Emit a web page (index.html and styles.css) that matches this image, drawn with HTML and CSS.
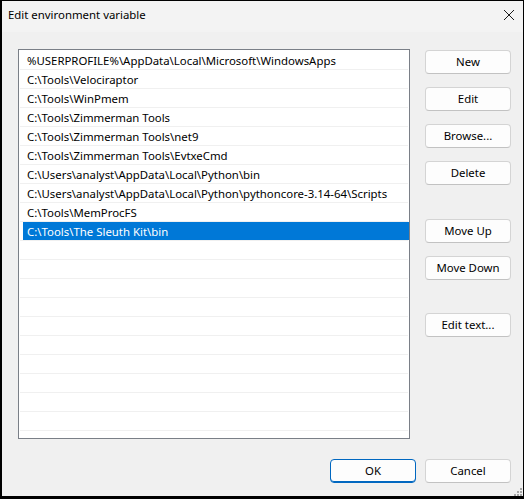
FILE: index.html
```html
<!DOCTYPE html>
<html>
<head>
<meta charset="utf-8">
<link rel="stylesheet" href="styles.css">
</head>
<body>
<div class="window">
  <div class="titlebar">
    <span class="title">Edit environment variable</span>
    <svg class="close" width="12" height="12" viewBox="0 0 12 12"><path d="M1 1 L11 11 M11 1 L1 11" stroke="#1a1a1a" stroke-width="1" fill="none"/></svg>
  </div>
  <div class="content">
    <div class="list">
      <div class="row"><span class="cell">%USERPROFILE%\AppData\Local\Microsoft\WindowsApps</span></div>
      <div class="row"><span class="cell">C:\Tools\Velociraptor</span></div>
      <div class="row"><span class="cell">C:\Tools\WinPmem</span></div>
      <div class="row"><span class="cell">C:\Tools\Zimmerman Tools</span></div>
      <div class="row"><span class="cell">C:\Tools\Zimmerman Tools\net9</span></div>
      <div class="row"><span class="cell">C:\Tools\Zimmerman Tools\EvtxeCmd</span></div>
      <div class="row"><span class="cell">C:\Users\analyst\AppData\Local\Python\bin</span></div>
      <div class="row"><span class="cell">C:\Users\analyst\AppData\Local\Python\pythoncore-3.14-64\Scripts</span></div>
      <div class="row"><span class="cell">C:\Tools\MemProcFS</span></div>
      <div class="row sel"><span class="cell">C:\Tools\The Sleuth Kit\bin</span></div>
      <div class="row"><span class="cell"></span></div>
      <div class="row"><span class="cell"></span></div>
      <div class="row"><span class="cell"></span></div>
      <div class="row"><span class="cell"></span></div>
      <div class="row"><span class="cell"></span></div>
      <div class="row"><span class="cell"></span></div>
      <div class="row"><span class="cell"></span></div>
      <div class="row"><span class="cell"></span></div>
      <div class="row"><span class="cell"></span></div>
      <div class="row"><span class="cell"></span></div>
      <div class="row"><span class="cell"></span></div>
    </div>
    <div class="side">
      <div class="group">
        <button class="btn">New</button>
        <button class="btn">Edit</button>
        <button class="btn">Browse...</button>
        <button class="btn">Delete</button>
      </div>
      <div class="group g2">
        <button class="btn">Move Up</button>
        <button class="btn">Move Down</button>
      </div>
      <div class="group g3">
        <button class="btn">Edit text...</button>
      </div>
    </div>
  </div>
  <div class="footer">
    <button class="btn primary">OK</button>
    <button class="btn">Cancel</button>
  </div>
  <svg class="grip" width="9" height="9" viewBox="0 0 9 9">
    <rect x="7" y="1" width="2" height="2" fill="#a6a6a6"/>
    <rect x="4" y="4" width="2" height="2" fill="#a6a6a6"/>
    <rect x="7" y="4" width="2" height="2" fill="#a6a6a6"/>
    <rect x="1" y="7" width="2" height="2" fill="#a6a6a6"/>
    <rect x="4" y="7" width="2" height="2" fill="#a6a6a6"/>
    <rect x="7" y="7" width="2" height="2" fill="#a6a6a6"/>
  </svg>
</div>
</body>
</html>
```
FILE: styles.css
```css
* { box-sizing: border-box; }
html, body { margin: 0; padding: 0; background: #000; }
body {
  width: 524px;
  height: 499px;
  padding: 1px 1px 3px 2px;
  font-family: "Noto Sans", "Segoe UI", sans-serif;
  font-size: 11.4px;
  color: #000;
}
.window {
  position: relative;
  width: 521px;
  height: 495px;
  background: #f0f0f0;
  display: flex;
  flex-direction: column;
}
.titlebar {
  height: 31px;
  background: #f3f3f3;
  display: flex;
  align-items: center;
  justify-content: space-between;
  padding: 0 8px 4px 6px;
}
.title { font-size: 11.4px; color: #000; }
.close { display: block; }
.content {
  display: flex;
  padding: 17px 12px 0 16px;
  gap: 15px;
}
.list {
  width: 392px;
  height: 390px;
  background: #fff;
  border: 1px solid #7a7f87;
  padding-top: 1px;
  overflow: hidden;
}
.row {
  height: 19px;
  margin: 0 1px;
  border-bottom: 1px solid #f0f0f0;
  display: flex;
}
.cell {
  flex: 1;
  margin-left: 3px;
  margin-right: -1px;
  padding-left: 4px;
  line-height: 19px;
  white-space: nowrap;
}
.row.sel .cell { background: #0078d7; color: #fff; }
.side {
  display: flex;
  flex-direction: column;
  width: 86px;
  padding-top: 1px;
}
.group { display: flex; flex-direction: column; gap: 13px; }
.g2 { margin-top: 34px; }
.g3 { margin-top: 33px; }
.btn {
  width: 86px;
  height: 24px;
  background: #fdfdfd;
  border: 1px solid #d4d4d4;
  border-bottom-color: #c2c2c2;
  border-radius: 4px;
  font-family: "Noto Sans", "Segoe UI", sans-serif;
  font-size: 11.4px;
  color: #000;
  padding: 0;
  line-height: 20px;
}
.footer {
  display: flex;
  justify-content: flex-end;
  gap: 9px;
  padding: 20px 12px 0 0;
}
.btn.primary { border: 1px solid #0067c0; box-shadow: inset 0 -1px 0 #0067c0; }
.grip { position: absolute; right: 1px; bottom: 0; }
```
